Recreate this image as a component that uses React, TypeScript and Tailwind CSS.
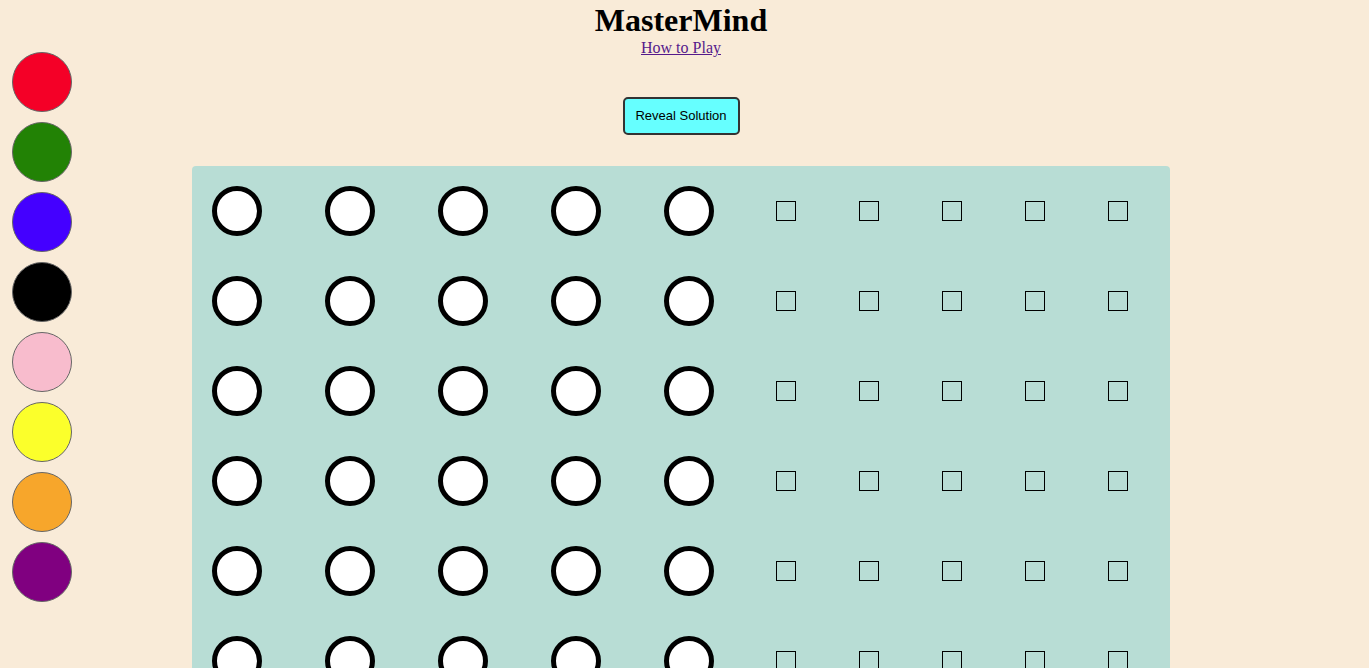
import React from 'react'

const palette = ['#f40027', '#228205', '#4400ff', '#000000', '#f8bccd', '#fbff2b', '#f7a62b', '#800080']

const ROWS = 10
const PEGS = 5

function GuessRow() {
  return (
    <div className="h-[90px] flex items-center pl-5 gap-[63px]">
      {Array.from({ length: PEGS }).map((_, i) => (
        <div key={`c${i}`} className="w-[50px] h-[50px] rounded-full bg-white border-[5px] border-black shrink-0" />
      ))}
      {Array.from({ length: PEGS }).map((_, i) => (
        <div key={`s${i}`} className={`w-5 h-5 border border-black shrink-0 ${i === 0 ? '-ml-px' : ''}`} />
      ))}
    </div>
  )
}

export default function App() {
  return (
    <div className="relative min-h-screen bg-[#f9ebd8] text-black font-['Liberation_Serif',serif]">
      {/* colour palette */}
      <div className="absolute left-3 top-[52px] flex flex-col gap-[10px]">
        {palette.map((c) => (
          <div
            key={c}
            className="w-[60px] h-[60px] rounded-full border border-[#666]"
            style={{ backgroundColor: c }}
          />
        ))}
      </div>

      <div className="flex flex-col items-center pr-[7px] pt-[2px]">
        <h1 className="text-[32px] font-bold leading-[37px]">MasterMind</h1>
        <a href="#" className="text-[#551a8b] underline text-base leading-[18px]">
          How to Play
        </a>
        <button className="mt-[40px] w-[117px] h-[38px] bg-[#66ffff] border-2 border-[#333] rounded-[5px] text-[13px] font-['Liberation_Sans',sans-serif]">
          Reveal Solution
        </button>
        <div className="mt-[31px] w-[978px] bg-[#b8ddd5] rounded-[4px]">
          {Array.from({ length: ROWS }).map((_, r) => (
            <GuessRow key={r} />
          ))}
        </div>
      </div>
    </div>
  )
}
